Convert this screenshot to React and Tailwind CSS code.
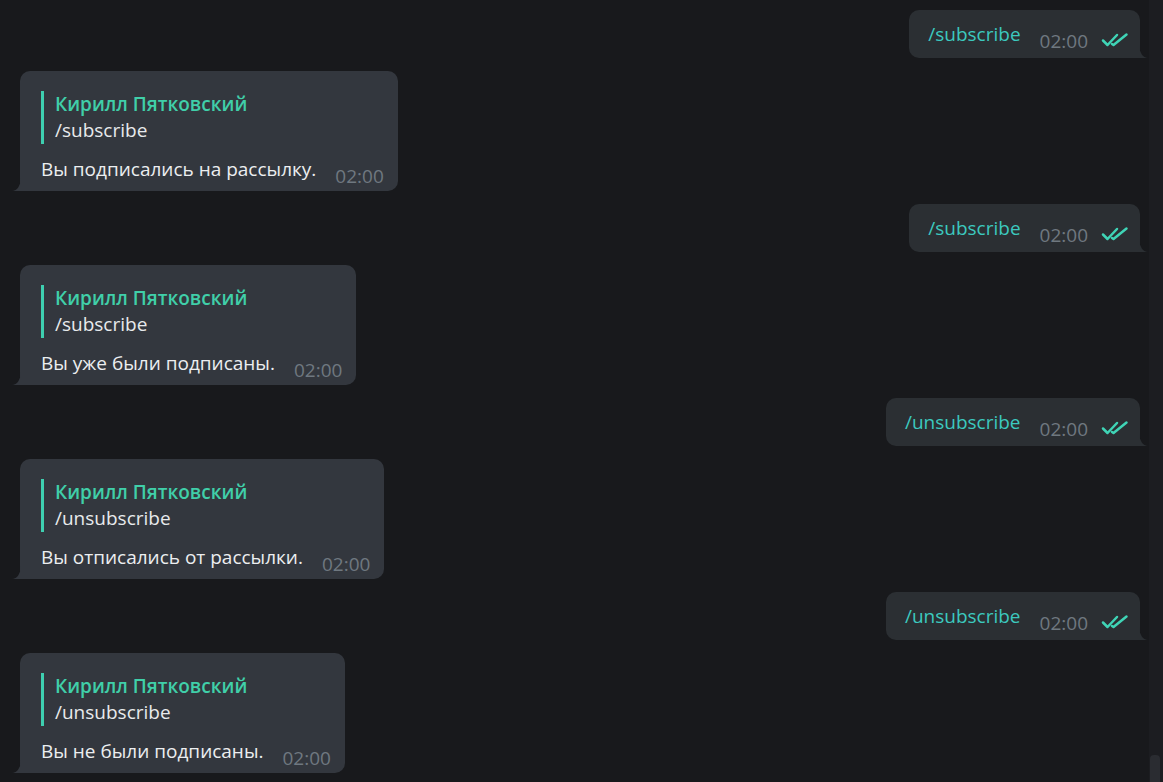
import React from "react";

const Checks = () => (
  <svg width="28" height="16" viewBox="0 0 28 16" className="block">
    <path d="M2 8.5 L6.5 13 L16 3" fill="none" stroke="#3fd4b6" strokeWidth="2.5" strokeLinecap="round" strokeLinejoin="round" />
    <path d="M11 12 L12.5 13 L25.5 2.5" fill="none" stroke="#3fd4b6" strokeWidth="2.5" strokeLinecap="round" strokeLinejoin="round" />
  </svg>
);

const Out = ({ text }) => (
  <div className="flex justify-end pr-[9px]">
    <div className="relative flex items-end rounded-[10px] rounded-br-none bg-[#2b2f33] pl-[19px] pr-[11px] pt-[12px] pb-[7px]">
      <span className="mb-[5px] text-[19px] leading-[24px] text-[#3cc9bf]">{text}</span>
      <span className="ml-[19px] text-[19px] leading-[20px] text-[#6f7880]">02:00</span>
      <span className="ml-[13px] mb-[3px]"><Checks /></span>
      <svg width="9" height="13" viewBox="0 0 9 13" className="absolute bottom-0 right-[-8px]">
        <path d="M0 0 A9 13 0 0 0 9 13 L0 13 Z" fill="#2b2f33" />
      </svg>
    </div>
  </div>
);

const In = ({ cmd, msg }) => (
  <div className="flex justify-start pl-[20px]">
    <div className="relative rounded-[10px] rounded-bl-none bg-[#33373e] pl-[21px] pr-[14px] pt-[20px] pb-[5px]">
      <div className="border-l-[3px] border-[#3ecfb0] pl-[11px]">
        <div className="text-[19px] font-semibold leading-[26px] text-[#40cfa9]">Кирилл Пятковский</div>
        <div className="text-[19px] leading-[27px] text-[#e8eaec]">{cmd}</div>
      </div>
      <div className="mt-[13px] flex items-end">
        <span className="mb-[5px] text-[19px] leading-[24px] text-[#eceef0]">{msg}</span>
        <span className="ml-[19px] text-[19px] leading-[20px] text-[#6f7880]">02:00</span>
      </div>
      <svg width="9" height="13" viewBox="0 0 9 13" className="absolute bottom-0 left-[-8px]">
        <path d="M9 0 A9 13 0 0 1 0 13 L9 13 Z" fill="#33373e" />
      </svg>
    </div>
  </div>
);

export default function App() {
  return (
    <div className="flex h-[782px] w-[1163px] overflow-hidden bg-[#18191c]" style={{ fontFamily: '"Open Sans", "Noto Sans", sans-serif' }}>
      <div className="flex flex-1 flex-col gap-[13px] pt-[10px]">
        <Out text="/subscribe" />
        <In cmd="/subscribe" msg="Вы подписались на рассылку." />
        <Out text="/subscribe" />
        <In cmd="/subscribe" msg="Вы уже были подписаны." />
        <Out text="/unsubscribe" />
        <In cmd="/unsubscribe" msg="Вы отписались от рассылки." />
        <Out text="/unsubscribe" />
        <In cmd="/unsubscribe" msg="Вы не были подписаны." />
      </div>
      <div className="flex w-[14px] flex-col justify-end bg-[#1c1d21] pb-0">
        <div className="ml-[1px] h-[27px] w-[10px] rounded-t-[4px] bg-[#2a2c31]" />
      </div>
    </div>
  );
}
